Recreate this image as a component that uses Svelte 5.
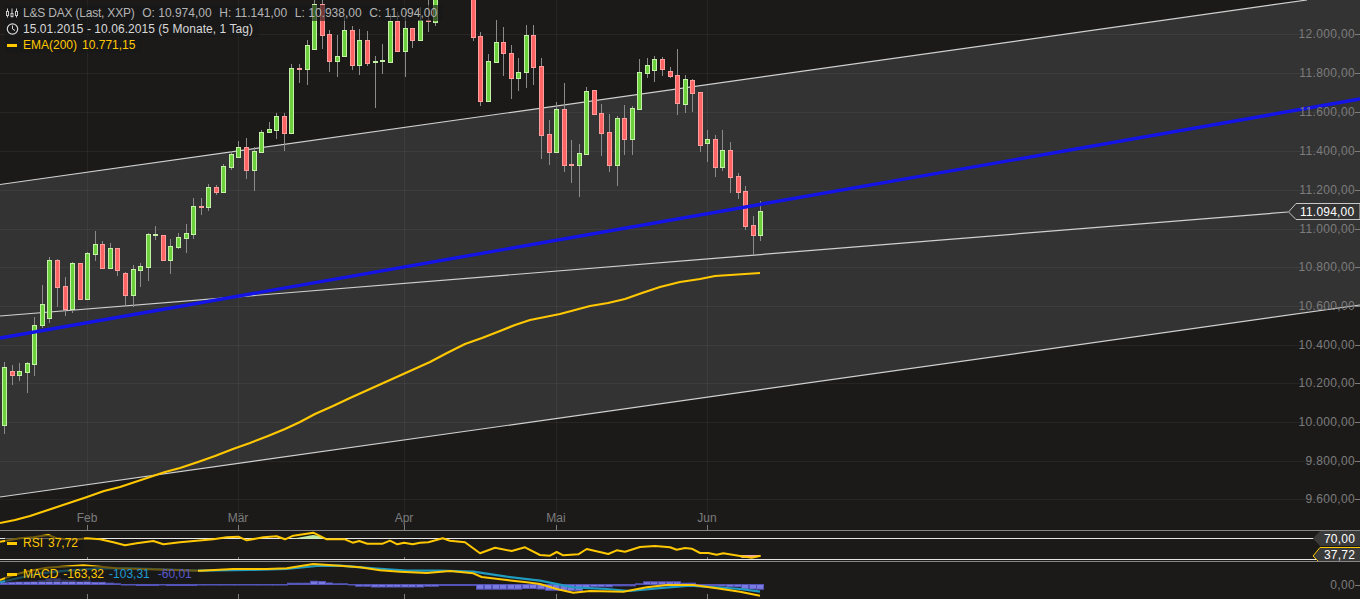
<script>
  // g = green, r = red: [colour, bodyTop, bodyBottom, wickTop, wickBottom]
  const candles = [
    ["g", 367, 425, 362, 434], ["r", 371, 375, 365, 385], ["g", 371, 375, 363, 381], ["g", 363, 372, 362, 393],
    ["g", 325, 364, 317, 376], ["g", 304, 325, 285, 328], ["g", 260, 318, 257, 323], ["r", 260, 287, 259, 307],
    ["r", 286, 309, 277, 316], ["g", 263, 309, 262, 313], ["r", 263, 299, 263, 299], ["g", 253, 299, 252, 299],
    ["g", 244, 254, 231, 261], ["r", 244, 268, 241, 269], ["g", 248, 268, 243, 269], ["r", 248, 270, 248, 276],
    ["r", 273, 295, 272, 305], ["g", 269, 295, 265, 307], ["g", 266, 270, 263, 287], ["g", 234, 267, 233, 281],
    ["g", 234, 235, 226, 240], ["r", 235, 260, 235, 260], ["g", 246, 260, 239, 274], ["g", 237, 247, 233, 249],
    ["g", 233, 238, 224, 253], ["g", 206, 234, 198, 239], ["r", 206, 207, 198, 215], ["g", 187, 207, 184, 211],
    ["r", 187, 192, 185, 195], ["g", 166, 192, 164, 192], ["g", 154, 167, 151, 170], ["g", 147, 157, 141, 158],
    ["r", 147, 170, 138, 179], ["g", 151, 170, 147, 191], ["g", 132, 152, 130, 152], ["g", 129, 132, 122, 133],
    ["g", 116, 130, 113, 139], ["r", 116, 133, 113, 151], ["g", 68, 133, 64, 134], ["r", 68, 69, 64, 83],
    ["g", 45, 69, 40, 85], ["g", 4, 49, 0, 49], ["r", 4, 35, 0, 49], ["r", 34, 61, 30, 72],
    ["g", 56, 61, 35, 77], ["g", 30, 56, 17, 56], ["r", 30, 65, 26, 70], ["g", 40, 65, 29, 75],
    ["r", 40, 63, 31, 66], ["g", 61, 62, 56, 108], ["g", 60, 61, 44, 74], ["g", 21, 62, 14, 62],
    ["r", 21, 51, 12, 52], ["g", 28, 51, 12, 77], ["r", 28, 40, 28, 48], ["g", 20, 40, 7, 40],
    ["r", 20, 21, 0, 32], ["g", -10, 22, -10, 26], null, null, null, null,
    ["r", -10, 37, -10, 41], ["r", 36, 101, 32, 106], ["g", 61, 101, 54, 101], ["g", 42, 62, 20, 62],
    ["r", 42, 53, 27, 76], ["r", 53, 78, 45, 99], ["g", 72, 78, 58, 91], ["g", 35, 72, 25, 88],
    ["r", 35, 67, 25, 85], ["r", 66, 135, 58, 159], ["r", 134, 152, 120, 165], ["g", 109, 152, 102, 152],
    ["r", 109, 165, 83, 172], ["r", 164, 165, 140, 183], ["g", 153, 165, 144, 197], ["g", 91, 154, 87, 154],
    ["r", 90, 114, 90, 114], ["r", 113, 133, 104, 156], ["r", 132, 165, 114, 172], ["g", 118, 165, 116, 186],
    ["r", 118, 139, 105, 155], ["g", 108, 139, 106, 155], ["g", 72, 109, 59, 109], ["g", 65, 73, 58, 78],
    ["g", 59, 70, 56, 82], ["r", 59, 69, 57, 76], ["r", 71, 76, 67, 78], ["r", 75, 103, 49, 115],
    ["g", 79, 104, 75, 113], ["r", 80, 93, 79, 112], ["r", 92, 145, 92, 152], ["g", 139, 143, 130, 162],
    ["r", 139, 167, 135, 177], ["g", 150, 167, 130, 171], ["r", 150, 177, 142, 193], ["r", 176, 192, 173, 199],
    ["r", 191, 226, 186, 230], ["r", 225, 235, 216, 255], ["g", 211, 235, 201, 241],
  ];

  const histogram = [
    1.7, 2.3, 2.7, 2.7, 3.3, 4, 5.7, 5.7, 4.3, 4, 3.3, 3.7, 2.3, 2.3, 1.3, 0.7, 0, 0, -1, -1, -1, 0, -1, -1, -1, -1,
    0, 0, 0, 0, 0, 0, 0, 0, 0, 0, 0, 0, 1.3, 1.3, 1.3, 3.3, 3, 1.5, 0.7, 0.7, 0, -1.7, -1.7, -2.5, -2.5, -2.5, -2.5,
    -2.5, -2.5, -2.5, -1.7, -1.7, -1, -1, -1, -1, -1, -4.7, -4.7, -4.7, -4.7, -4.7, -4.7, -4, -4, -4.5, -5.7, -5.7,
    -5.7, -6, -6, -3.3, -2.3, -2.3, -2.3, -1.3, -1.3, -1.3, 0.7, 2.7, 2.7, 2.7, 2.7, 2.7, 1.3, 1.3, -0.7, -1, -1,
    -1.5, -2.3, -2.3, -4.5, -4.5, -4.7,
  ];

  const priceLabels = [
    ["12.000,00", 34], ["11.800,00", 73], ["11.600,00", 112], ["11.400,00", 151], ["11.200,00", 190],
    ["11.000,00", 229], ["10.800,00", 267], ["10.600,00", 306], ["10.400,00", 345], ["10.200,00", 383],
    ["10.000,00", 422], ["9.800,00", 461], ["9.600,00", 499],
  ];
  const months = [["Feb", 87], ["Mär", 238], ["Apr", 404], ["Mai", 556], ["Jun", 707]];

  const ema = "0,523 15,520 30,516 45,511 60,506 87,497 104,491 120,487 135,482 150,477 165,472 180,468 198,462 215,456 233,449 250,443 268,436 285,429 300,422 315,414 333,406 350,398 370,389 390,380 410,371 430,362 447,353 465,344 482,338 500,331 515,325 530,320 545,317 560,314 575,310 590,306 608,303 625,299 642,293 660,287 680,282 700,279 715,276 730,275 745,274 760,273";

  // traced from the 3x crops: x, y are crop px, crops start at y 505
  const rsiLeft = [[0,110],[30,105],[60,100],[100,97],[145,90],[170,100],[200,103],[235,103],[260,100],[300,103],[340,112],[375,121],[410,115],[460,108],[490,118],[540,112],[590,107],[640,103],[680,97],[715,95],[740,106],[790,97],[830,94],[855,103],[880,92],[940,83],[980,103]];
  const rsiRight = [[0,103],[15,103],[38,113],[58,108],[82,116],[128,116],[150,107],[172,118],[192,113],[218,118],[240,113],[265,112],[308,100],[330,107],[375,112],[420,145],[465,128],[515,138],[555,127],[600,150],[630,152],[650,141],[670,151],[715,148],[740,132],[805,147],[830,136],[855,140],[900,126],[945,123],[990,127],[1010,134],[1035,129],[1055,131],[1080,144],[1105,144],[1130,149],[1150,145],[1200,153],[1235,158],[1262,152]];
  const macdLeft = [[0,225],[40,210],[90,197],[140,188],[250,181],[350,190],[600,197],[700,192],[800,192],[860,190],[940,177]];
  const macdRight = [[0,182],[60,187],[120,196],[180,200],[260,204],[330,198],[400,205],[425,216],[500,225],[560,232],[600,237],[650,252],[700,263],[750,258],[850,260],[920,247],[980,240],[1060,240],[1130,250],[1200,260],[1260,272]];
  const signalLeft = [[0,232],[60,218],[120,205],[200,197],[300,190],[400,190],[600,197],[750,195],[860,192],[950,183]];
  const signalRight = [[0,182],[100,190],[200,197],[300,197],[400,200],[500,215],[600,227],[700,247],[800,252],[870,258],[950,250],[1050,242],[1130,247],[1200,252],[1260,260]];

  const candleX = (i) => Math.round(4 + i * 7.563);

  function trace(left, right, offset) {
    const a = left.map(([x, y]) => `${x / 3},${(y / 3 + 505 - offset).toFixed(1)}`);
    const b = right.map(([x, y]) => `${(340 + x / 3).toFixed(1)},${(y / 3 + 505 - offset).toFixed(1)}`);
    return [...a, ...b].join(" ");
  }

  const rsiLine = trace(rsiLeft, rsiRight, 531);
  const macdLine = trace(macdLeft, macdRight, 562);
  const signalLine = trace(signalLeft, signalRight, 562);
</script>

<div class="page">
  <section class="panel main">
    <svg width="1360" height="530" viewBox="0 0 1360 530">
      <polygon class="channel" points="0,184.5 1307,0 1360,0 1360,305 0,497" />

      {#each priceLabels as [, y]}
        <line class="grid" x1="0" x2="1360" y1={y + 0.5} y2={y + 0.5} />
      {/each}
      {#each months as [, x]}
        <line class="grid" x1={x + 0.5} x2={x + 0.5} y1="0" y2="530" />
      {/each}

      <line class="band" x1="0" y1="184.5" x2="1307" y2="0" />
      <line class="band" x1="0" y1="316" x2="1288" y2="212" />
      <line class="band" x1="0" y1="497" x2="1360" y2="305" />

      {#each candles as c, i}
        {#if c}
          <line class="wick" x1={candleX(i) + 0.5} x2={candleX(i) + 0.5} y1={c[3]} y2={c[4]} />
          <rect
            class={c[0] === "g" ? "body up" : "body down"}
            x={candleX(i) - 1.5}
            y={c[1] + 0.5}
            width="4"
            height={c[2] - c[1]}
          />
        {/if}
      {/each}

      <line class="trend" x1="0" y1="338" x2="1360" y2="99" />
      <polyline class="ema" points={ema} />

      {#each priceLabels as [label, y]}
        <text class="axis value" x="1355" y={y + 4} text-anchor="end">{label}</text>
        <line class="tick" x1="1355" x2="1360" y1={y + 0.5} y2={y + 0.5} />
      {/each}
      {#each months as [label, x]}
        <text class="axis" x={x} y="522" text-anchor="middle">{label}</text>
        <line class="tick" x1={x + 0.5} x2={x + 0.5} y1="525" y2="530" />
      {/each}

      <polygon class="price-tag" points="1360,203.5 1296,203.5 1288.5,212 1296,219.5 1360,219.5" />
      <text class="tag-text" x="1300" y="216">11.094,00</text>
    </svg>

    <div class="legend top">
      <div class="legend-row">
        <svg class="glyph" width="14" height="14" viewBox="0 0 14 14">
          <path d="M1.5 2.5v9M6 2.5v9M10.5 2.5v9" stroke="#c8c8c8" fill="none" />
          <rect x="0.5" y="5.5" width="2" height="4" fill="#1b1a19" stroke="#c8c8c8" />
          <rect x="5" y="7.5" width="2" height="3" fill="#1b1a19" stroke="#c8c8c8" />
          <rect x="9.5" y="5.5" width="2" height="4" fill="#1b1a19" stroke="#c8c8c8" />
        </svg>
        <span class="muted title">L&amp;S DAX (Last, XXP)</span>
        <span class="muted gap">O: 10.974,00</span>
        <span class="muted gap">H: 11.141,00</span>
        <span class="muted gap">L: 10.938,00</span>
        <span class="muted gap">C: 11.094,00</span>
      </div>
      <div class="legend-row">
        <svg class="glyph" width="14" height="14" viewBox="0 0 14 14">
          <circle cx="6.5" cy="7" r="5.2" fill="none" stroke="#d8d8d8" stroke-width="1.2" />
          <path d="M6.5 3.5V7l2.5 1.5" fill="none" stroke="#d8d8d8" />
        </svg>
        <span class="light range">15.01.2015 - 10.06.2015 (5 Monate, 1 Tag)</span>
      </div>
      <div class="legend-row">
        <span class="dash"></span>
        <span class="yellow">EMA(200)</span>
        <span class="yellow gap-small">10.771,15</span>
      </div>
    </div>
  </section>

  <section class="panel rsi">
    <svg width="1360" height="31" viewBox="0 0 1360 31">
      {#each months as [, x]}
        <line class="tick" x1={x + 0.5} x2={x + 0.5} y1="26" y2="29" />
      {/each}
      <line class="level" x1="0" x2="1360" y1="7.5" y2="7.5" />
      <line class="level" x1="0" x2="1360" y1="28.5" y2="28.5" />
      <polygon class="over" points="293,7.5 302,6 313,4 320,5 327,7.5" />
      <polygon class="under" points="737,24 760,24 760,25.5 752,27 742,27" />
      <polyline class="ema thin" points={rsiLine} />
      <polygon class="side-tag" points="1360,0 1320,0 1313,7.5 1320,15 1360,15" />
      <text class="tag-text" x="1324" y="12">70,00</text>
      <polygon class="side-tag" points="1360,16.5 1320,16.5 1313,25 1318,30 1360,30" />
      <polyline class="tag-edge" points="1360,16.5 1320,16.5 1313,25 1318,30" />
      <text class="tag-text" x="1324" y="28">37,72</text>
    </svg>
    <div class="legend sub first">
      <div class="legend-row">
        <span class="dash"></span>
        <span class="yellow">RSI</span>
        <span class="yellow gap-small">37,72</span>
      </div>
    </div>
  </section>

  <section class="panel macd">
    <svg width="1360" height="38" viewBox="0 0 1360 38">
      {#each months as [, x]}
        <line class="tick" x1={x + 0.5} x2={x + 0.5} y1="32" y2="37" />
      {/each}
      <line class="zero" x1="0" x2="763" y1="22.5" y2="22.5" />
      {#each histogram as h, i}
        <rect
          class="bar"
          x={candleX(i) - 3.5}
          y={(h > 0 ? 22.5 - h : 22.5).toFixed(1)}
          width="7"
          height={Math.max(Math.abs(h), 0.5)}
        />
      {/each}
      <polyline class="signal" points={signalLine} />
      <polyline class="ema thin" points={macdLine} />
      <text class="axis value" x="1355" y="27" text-anchor="end">0,00</text>
      <line class="tick" x1="1355" x2="1360" y1="23.5" y2="23.5" />
    </svg>
    <div class="legend sub second">
      <div class="legend-row">
        <span class="dash"></span>
        <span class="yellow">MACD</span>
        <span class="yellow gap-small">-163,32</span>
        <span class="blue gap-small">-103,31</span>
        <span class="indigo gap-wide">-60,01</span>
      </div>
    </div>
  </section>
</div>

<style>
  :global(body) {
    margin: 0;
    background: #1b1a19;
  }

  .page {
    width: 1360px;
    height: 599px;
    overflow: hidden;
    font-family: "Liberation Sans", Arial, sans-serif;
    font-size: 12px;
  }

  .panel {
    position: relative;
  }

  .panel > svg {
    display: block;
  }

  .main {
    height: 530px;
  }

  .rsi {
    height: 30px;
    overflow: hidden;
    border-top: 1px solid #868686;
  }

  .macd {
    height: 37px;
    border-top: 1px solid #868686;
    overflow: hidden;
  }

  .channel {
    fill: #333333;
  }

  .grid {
    stroke: #fff;
    stroke-opacity: 0.05;
  }

  .band {
    stroke: #d0d0d0;
    stroke-width: 1.2;
  }

  .wick {
    stroke: #8a8a8a;
  }

  .body {
    stroke-width: 1;
  }

  .up {
    fill: #6cd03c;
    stroke: #c4f0a8;
  }

  .down {
    fill: #ff6464;
    stroke: #ff9c9c;
  }

  .trend {
    stroke: #1414e6;
    stroke-width: 3.4;
  }

  .ema {
    fill: none;
    stroke: #ffc800;
    stroke-width: 2.2;
    stroke-linejoin: round;
  }

  .thin {
    stroke-width: 2;
  }

  .axis {
    fill: #7c7c7c;
    font-size: 12px;
  }

  .value {
    letter-spacing: 0.35px;
  }

  .tick {
    stroke: #7c7c7c;
  }

  .price-tag {
    fill: #333333;
    stroke: #c8c8c8;
  }

  .tag-text {
    fill: #ffffff;
    font-size: 12px;
    letter-spacing: 0.2px;
  }

  .level {
    stroke: #e6e6e6;
    stroke-width: 1;
  }

  .over {
    fill: #bde8a0;
  }

  .under {
    fill: #f0a8a8;
  }

  .side-tag {
    fill: #3a3a3a;
  }

  .tag-edge {
    fill: none;
    stroke: #ffc800;
  }

  .zero {
    stroke: #5050b0;
    stroke-width: 1;
  }

  .bar {
    fill: #7a7ae0;
    stroke: #5454b8;
    stroke-width: 1;
  }

  .signal {
    fill: none;
    stroke: #1f9bc0;
    stroke-width: 2.2;
    stroke-linejoin: round;
  }

  .legend {
    position: absolute;
    left: 5px;
    display: flex;
    flex-direction: column;
    align-items: flex-start;
  }

  .top {
    top: 5px;
    left: 0;
    padding-left: 5px;
  }

  .first {
    top: 4px;
  }

  .second {
    top: 4px;
  }

  .legend-row {
    display: flex;
    align-items: center;
    height: 16px;
    padding-right: 6px;
    background: rgba(24, 24, 24, 0.62);
    white-space: nowrap;
  }

  .glyph {
    flex: none;
    margin-left: 1px;
    margin-right: 3px;
  }

  .dash {
    flex: none;
    width: 10px;
    height: 3px;
    margin: 0 6px 0 2px;
    background: #ffc800;
  }

  .muted {
    color: #b4b4b4;
  }

  .title {
    letter-spacing: -0.2px;
  }

  .light {
    color: #d8d8d8;
  }

  .range {
    letter-spacing: 0.05px;
  }

  .yellow {
    color: #ffc800;
  }

  .blue {
    color: #1f9bd6;
  }

  .indigo {
    color: #5858cc;
  }

  .gap {
    margin-left: 7.7px;
  }

  .gap-small {
    margin-left: 5px;
  }

  .gap-wide {
    margin-left: 8px;
  }
</style>
